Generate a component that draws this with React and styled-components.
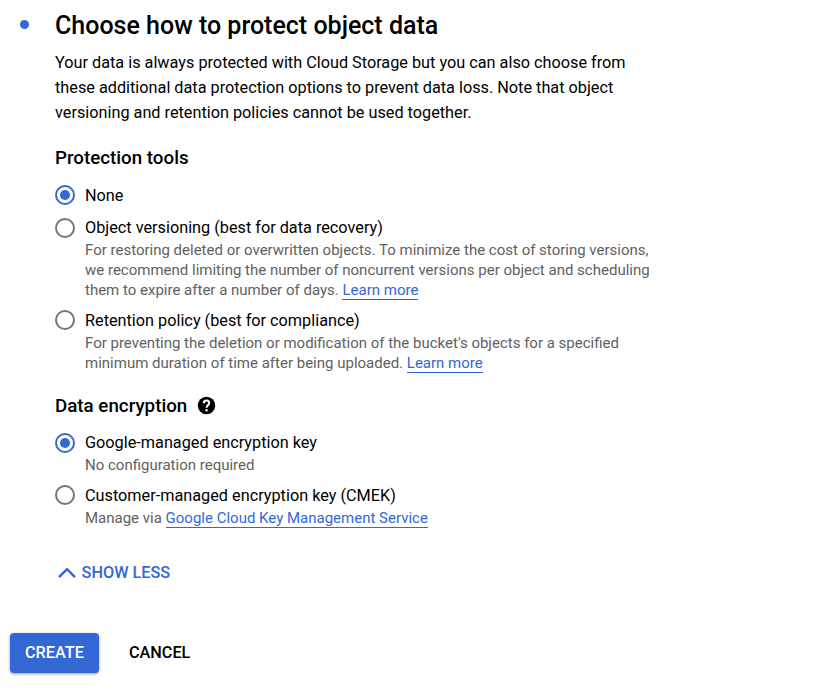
import React, { useState } from "react";
import styled, { createGlobalStyle } from "styled-components";

const GlobalStyle = createGlobalStyle`
  body {
    margin: 0;
    background: #fff;
    color: #000;
    font-family: Roboto, "Liberation Sans", sans-serif;
  }
`;

const Page = styled.main`
  display: flex;
  flex-direction: column;
  width: 829px;
  height: 692px;
  overflow: hidden;
  box-sizing: border-box;
  padding: 10px 10px 0;
`;

const Step = styled.section`
  display: flex;
  align-items: flex-start;
`;

const StepDot = styled.span`
  flex: none;
  width: 9px;
  height: 9px;
  margin: 10px 26px 0 10px;
  border-radius: 50%;
  background: #3367d6;
`;

const StepContent = styled.div`
  display: flex;
  flex-direction: column;
  align-items: flex-start;
`;

const Title = styled.h1`
  margin: 0 0 8px;
  font-size: 25px;
  font-weight: 500;
  line-height: 32px;
  white-space: nowrap;
`;

const Intro = styled.p`
  margin: 0 0 21px;
  font-size: 16.25px;
  line-height: 25px;
  white-space: nowrap;
`;

const GroupTitle = styled.h2`
  display: flex;
  align-items: center;
  gap: 9px;
  margin: 0;
  font-size: 18.75px;
  font-weight: 500;
  line-height: 24px;
  white-space: nowrap;
`;

const RadioGroup = styled.div`
  display: flex;
  flex-direction: column;
  gap: 10.5px;
  padding: ${(props) => props.$top}px 0 21.3px;
`;

const Option = styled.label`
  display: flex;
  align-items: flex-start;
  gap: 10px;
  min-height: 21.8px;
  cursor: pointer;
`;

const Radio = styled.input`
  appearance: none;
  flex: none;
  display: grid;
  place-items: center;
  box-sizing: border-box;
  width: 20px;
  height: 20px;
  margin: 0;
  border: 2px solid #757575;
  border-radius: 50%;

  &:checked {
    border-color: #3367d6;
  }

  &:checked::before {
    content: "";
    width: 10px;
    height: 10px;
    border-radius: 50%;
    background: #3367d6;
  }
`;

const OptionText = styled.span`
  display: flex;
  flex-direction: column;
  padding-top: 0.6px;
  white-space: nowrap;
`;

const OptionLabel = styled.span`
  font-size: 16.25px;
  line-height: 20px;
`;

const Help = styled.span`
  margin-top: 1.7px;
  color: #616161;
  font-size: 15px;
  line-height: 20px;
`;

const Link = styled.a`
  color: #3367d6;
  text-decoration: none;
  border-bottom: 1px solid #3367d6;
`;

const ShowLess = styled.button`
  display: flex;
  align-items: center;
  gap: 6px;
  margin: 14px 0 0 2.6px;
  padding: 0;
  border: none;
  background: none;
  color: #3367d6;
  font: 500 16.25px/20px Roboto, sans-serif;
  cursor: pointer;
`;

const Actions = styled.footer`
  display: flex;
  gap: 15px;
  margin-top: 50px;
`;

const Button = styled.button`
  height: 40px;
  padding: 0 15px;
  border: none;
  border-radius: 4px;
  font: 500 16.25px/40px Roboto, sans-serif;
  white-space: nowrap;
  cursor: pointer;
  color: ${(props) => (props.$primary ? "#fff" : "#000")};
  background: ${(props) => (props.$primary ? "#3367d6" : "none")};
  box-shadow: ${(props) =>
    props.$primary ? "0 1px 3px rgba(0, 0, 0, 0.4)" : "none"};
`;

const HelpIcon = () => (
  <svg width="21" height="21" viewBox="0 0 24 24">
    <circle cx="12" cy="12" r="10" fill="#000" />
    <path
      d="M8.9 9.3c0-1.8 1.4-3 3.1-3s3.1 1.2 3.1 2.9c0 2.3-3 2.5-3 5.3"
      fill="none"
      stroke="#fff"
      strokeWidth="2.4"
    />
    <path d="M10.8 16.2h2.5v2.5h-2.5z" fill="#fff" />
  </svg>
);

const ChevronUp = () => (
  <svg width="18" height="12" viewBox="0 0 18 12" fill="none">
    <path d="M1 10.2L9 2.2l8 8" stroke="#3367d6" strokeWidth="2.5" />
  </svg>
);

const protectionTools = [
  { id: "none", label: "None" },
  {
    id: "versioning",
    label: "Object versioning (best for data recovery)",
    help: (
      <>
        For restoring deleted or overwritten objects. To minimize the cost of storing versions,
        <br />
        we recommend limiting the number of noncurrent versions per object and scheduling
        <br />
        them to expire after a number of days. <Link href="#">Learn more</Link>
      </>
    ),
  },
  {
    id: "retention",
    label: "Retention policy (best for compliance)",
    help: (
      <>
        For preventing the deletion or modification of the bucket's objects for a specified
        <br />
        minimum duration of time after being uploaded. <Link href="#">Learn more</Link>
      </>
    ),
  },
];

const encryptionKeys = [
  {
    id: "google",
    label: "Google-managed encryption key",
    help: "No configuration required",
  },
  {
    id: "cmek",
    label: "Customer-managed encryption key (CMEK)",
    help: (
      <>
        Manage via <Link href="#">Google Cloud Key Management Service</Link>
      </>
    ),
  },
];

const Options = ({ name, options, value, onChange, top }) => (
  <RadioGroup $top={top}>
    {options.map((option) => (
      <Option key={option.id}>
        <Radio
          type="radio"
          name={name}
          checked={value === option.id}
          onChange={() => onChange(option.id)}
        />
        <OptionText>
          <OptionLabel>{option.label}</OptionLabel>
          {option.help && <Help>{option.help}</Help>}
        </OptionText>
      </Option>
    ))}
  </RadioGroup>
);

const App = () => {
  const [tool, setTool] = useState("none");
  const [encryption, setEncryption] = useState("google");

  return (
    <>
      <GlobalStyle />
      <Page>
        <Step>
          <StepDot />
          <StepContent>
            <Title>Choose how to protect object data</Title>
            <Intro>
              Your data is always protected with Cloud Storage but you can also choose from
              <br />
              these additional data protection options to prevent data loss. Note that object
              <br />
              versioning and retention policies cannot be used together.
            </Intro>
            <GroupTitle>Protection tools</GroupTitle>
            <Options
              name="tool"
              options={protectionTools}
              value={tool}
              onChange={setTool}
              top={15.3}
            />
            <GroupTitle>
              Data encryption <HelpIcon />
            </GroupTitle>
            <Options
              name="encryption"
              options={encryptionKeys}
              value={encryption}
              onChange={setEncryption}
              top={14.6}
            />
            <ShowLess>
              <ChevronUp />
              SHOW LESS
            </ShowLess>
          </StepContent>
        </Step>
        <Actions>
          <Button $primary>CREATE</Button>
          <Button>CANCEL</Button>
        </Actions>
      </Page>
    </>
  );
};

export default App;
